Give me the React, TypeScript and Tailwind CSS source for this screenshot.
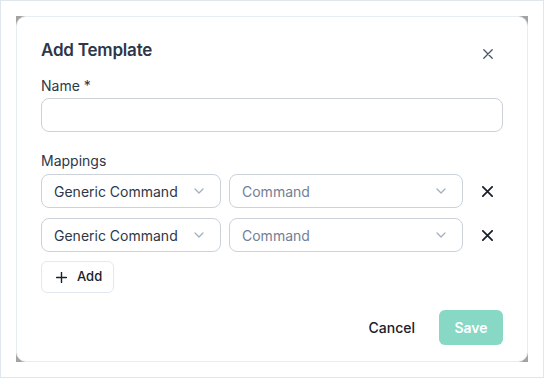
import React from "react";

const Chevron = () => (
  <svg width="10" height="6" viewBox="0 0 10 6" fill="none" className="shrink-0">
    <path d="M1 1l4 4 4-4" stroke="#a0aec0" strokeWidth="1.2" strokeLinecap="round" strokeLinejoin="round" />
  </svg>
);

const XIcon = ({ size = 10, color = "#2d3748", w = 1.5 }: { size?: number; color?: string; w?: number }) => (
  <svg width={size} height={size} viewBox="0 0 10 10" fill="none">
    <path d="M0.8 0.8l8.4 8.4M9.2 0.8l-8.4 8.4" stroke={color} strokeWidth={w} strokeLinecap="round" />
  </svg>
);

const Row = () => (
  <div className="flex h-[34px] items-center">
    <div className="flex h-[34px] w-[180px] items-center justify-between rounded-lg border border-[#cbd2da] pl-[12px] pr-[16px] text-[14px] text-[#2d3748]">
      <span>Generic Command</span>
      <Chevron />
    </div>
    <div className="ml-[8px] flex h-[34px] w-[234px] items-center justify-between rounded-lg border border-[#cbd2da] pl-[12px] pr-[16px] text-[14px] text-[#718096]">
      <span>Command</span>
      <Chevron />
    </div>
    <div className="flex h-[34px] flex-1 items-center justify-end pr-[10px]">
      <XIcon size={11} color="#1a202c" w={1.6} />
    </div>
  </div>
);

export default function App() {
  return (
    <div
      className="h-[378px] w-[544px] border border-[#dfe6ee] bg-white p-[15px]"
      style={{ fontFamily: "Inter, 'Noto Sans', sans-serif" }}
    >
      <div className="h-[346px] w-[512px] bg-[#a3a3a3]">
        <div className="flex h-full w-full flex-col rounded-[10px] border border-[#e8edf2] bg-white px-[24px]">
          <div className="mt-[20px] flex h-[28px] items-center justify-between">
            <h2 className="text-[17px] font-semibold tracking-[-0.2px] text-[#2d3748]">Add Template</h2>
            <div className="mt-[6px] flex h-[20px] w-[30px] items-center justify-end pr-[10px]">
              <XIcon size={10} color="#4a5568" w={1.3} />
            </div>
          </div>
          <label className="mt-[11px] h-[20px] text-[14px] font-normal leading-[20px] text-[#2d3748]">Name *</label>
          <div className="mt-[2px] h-[34px] w-full rounded-lg border border-[#cbd2da]" />
          <label className="mt-[19px] h-[20px] text-[14px] font-normal leading-[20px] text-[#2d3748]">Mappings</label>
          <div className="mt-[3px] flex flex-col gap-[10px]">
            <Row />
            <Row />
          </div>
          <div className="mt-[9px]">
            <button className="flex h-[32px] w-[73px] items-center gap-[10px] rounded-md border border-[#e2e8f0] pl-[14px] text-[13px] font-medium text-[#1a202c]">
              <svg width="11" height="11" viewBox="0 0 11 11" fill="none">
                <path d="M5.5 0.5v10M0.5 5.5h10" stroke="#1a202c" strokeWidth="1.4" strokeLinecap="round" />
              </svg>
              <span>Add</span>
            </button>
          </div>
          <div className="mt-[17px] flex items-center justify-end gap-[8px]">
            <button className="flex h-[35px] items-center px-[16px] text-[14px] font-medium text-[#1a202c]">Cancel</button>
            <button className="flex h-[35px] w-[64px] items-center justify-center rounded-md bg-[#88d8c6] text-[14px] font-semibold text-white">
              Save
            </button>
          </div>
        </div>
      </div>
    </div>
  );
}
